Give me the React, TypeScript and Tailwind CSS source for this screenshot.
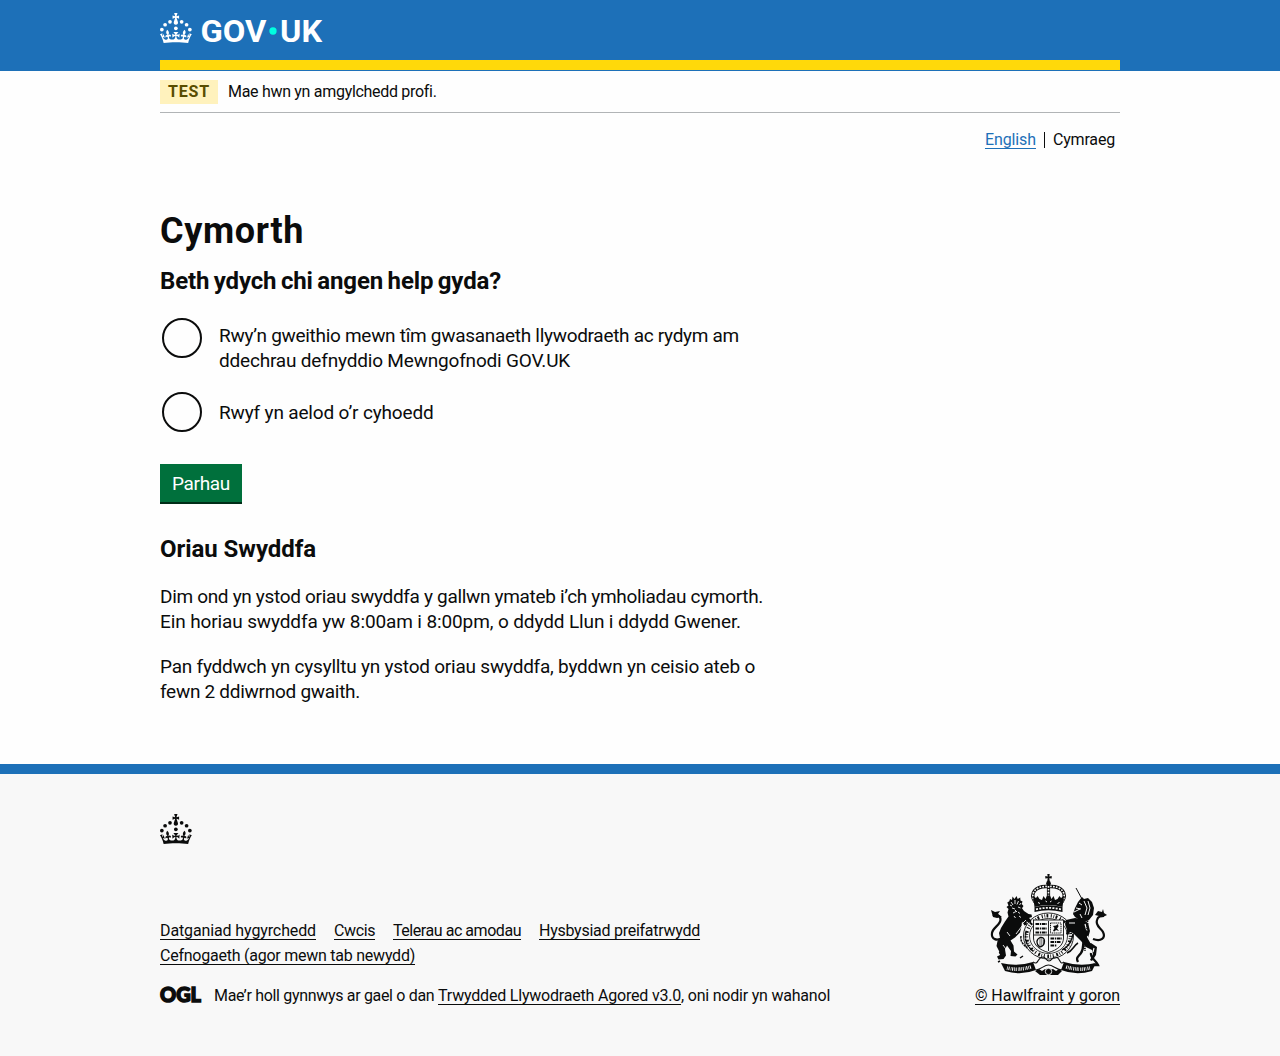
import type { ReactNode } from "react";

const link =
  "underline decoration-1 underline-offset-[3px] [text-decoration-skip-ink:none]";

function Crown() {
  return (
    <g fill="currentColor">
      <circle cx="20" cy="17.6" r="3.7" />
      <circle cx="10.2" cy="23.5" r="3.7" />
      <circle cx="3.7" cy="33.2" r="3.7" />
      <circle cx="31.7" cy="30.6" r="3.7" />
      <circle cx="43.3" cy="17.6" r="3.7" />
      <circle cx="53.2" cy="23.5" r="3.7" />
      <circle cx="59.7" cy="33.2" r="3.7" />
      <path d="M33.1,9.8c.2-.1.3-.3.5-.5l4.6,2.4v-6.8l-4.6,1.5c-.1-.2-.3-.3-.5-.5l1.9-5.9h-6.7l1.9,5.9c-.2.1-.3.3-.5.5l-4.6-1.5v6.8l4.6-2.4c.1.2.3.3.5.5l-2.6,8c-.9,2.8,1.2,5.7,4.1,5.7h0c3,0,5.1-2.9,4.1-5.7l-2.6-8ZM37,37.9s-3.4,3.8-4.1,6.1c2.2,0,4.2-.5,6.4-2.8l-.7,8.5c-2-2.8-4.4-4.1-5.7-3.8.1,3.1.5,6.7,5.8,7.2,3.7.3,6.7-1.5,7-3.8.4-2.6-2-4.3-3.7-1.6-1.4-4.5,2.4-6.1,4.9-3.2-1.9-4.5-1.8-7.7,2.4-10.9,3,4,2.6,7.3-1.2,11.1,2.4-1.3,6.2,0,4,4.6-1.2-2.8-3.7-2.2-4.2.2-.3,1.7.7,3.7,3,4.2,1.9.3,4.7-.9,7-5.9-1.3,0-2.4.7-3.9,1.7l2.4-8c.6,2.3,1.4,3.7,2.2,4.5.6-1.6.5-2.8,0-5.3l5,1.8c-2.6,3.6-5.2,8.7-7.3,17.5-7.4-1.1-15.7-1.7-24.5-1.7h0c-8.8,0-17.1.6-24.5,1.7-2.1-8.9-4.7-13.9-7.3-17.5l5-1.8c-.5,2.5-.6,3.7,0,5.3.8-.8,1.6-2.3,2.2-4.5l2.4,8c-1.5-1-2.6-1.7-3.9-1.7,2.3,5,5.2,6.2,7,5.9,2.3-.4,3.3-2.4,3-4.2-.5-2.4-3-3.1-4.2-.2-2.2-4.6,1.6-6,4-4.6-3.7-3.7-4.2-7.1-1.2-11.1,4.2,3.2,4.3,6.4,2.4,10.9,2.5-2.8,6.3-1.3,4.9,3.2-1.8-2.7-4.1-1-3.7,1.6.3,2.3,3.3,4.1,7,3.8,5.4-.5,5.7-4.2,5.8-7.2-1.3-.2-3.7,1-5.7,3.8l-.7-8.5c2.2,2.3,4.2,2.7,6.4,2.8-.7-2.3-4.1-6.1-4.1-6.1h10.6,0Z" />
    </g>
  );
}

function GovLogo() {
  return (
    <svg width="164" height="30" viewBox="0 0 328 60" className="block overflow-visible text-white" aria-label="GOV.UK">
      <Crown />
      <text x="81" y="58" fontSize="61" fontWeight="700" fill="currentColor" textLength="132" lengthAdjust="spacingAndGlyphs" fontFamily="Roboto, sans-serif">GOV</text>
      <circle cx="226" cy="36" r="7.3" fill="#00ffe0" />
      <text x="240" y="58" fontSize="61" fontWeight="700" fill="currentColor" textLength="84" lengthAdjust="spacingAndGlyphs" fontFamily="Roboto, sans-serif">UK</text>
    </svg>
  );
}

function RoyalArms() {
  return (
    <svg width="117" height="102" viewBox="0 0 117 102" className="block" fill="#0b0c0c" stroke="none">
      {/* crown */}
      <path d="M57.3 0h2.4l-.4 2.4 2.4-.4v2.6l-2.4-.4.6 3.8h-2.8l.6-3.8-2.4.4V2l2.4.4z" />
      <circle cx="58.5" cy="9.5" r="2.4" />
      <path d="M45 28C39 19 46 12 57 12.5M72 28c6-9-1-16-12-15.500" fill="none" stroke="#0b0c0c" strokeWidth="3.4" />
      <path d="M45 28C39 19 46 12 57 12.500M72 28c6-9-1-16-12-15.500" fill="none" stroke="#f8f8f8" strokeWidth="1.700" strokeDasharray="1.800 1.200" />
      <path d="M58.500 11v14" stroke="#0b0c0c" strokeWidth="3.200" />
      <path d="M58.500 12v12" stroke="#f8f8f8" strokeWidth="1.600" strokeDasharray="1.700 1.200" />
      <path d="M43 22l3 2 1.500-2 2 3 2.500 1 1.500-4 2 3 1.500-3.500h3L61.500 25l2-3 1.500 4 2.500-1 2-3 1.500 2 3-2-1.500 11Q58.500 29 44.500 33z" />
      <path d="M48 28.500l2 1M55.500 27l1.500 1M61.500 27l-1.500 1M67.500 29.500l2-1" stroke="#f8f8f8" strokeWidth="1" />
      <path d="M44.500 33q14-3.500 28 0v5q-14-3.500-28 0z" />
      <path d="M46 35.300q12.500-2.800 25 0" fill="none" stroke="#f8f8f8" strokeWidth="1.800" strokeDasharray="2 1.300" />

      {/* garter */}
      <ellipse cx="58.500" cy="62" rx="25" ry="23" fill="none" stroke="#0b0c0c" strokeWidth=".9" />
      <ellipse cx="58.500" cy="62" rx="19" ry="17.500" fill="none" stroke="#0b0c0c" strokeWidth=".8" />
      <ellipse cx="58.500" cy="62" rx="22" ry="20.200" fill="none" stroke="#0b0c0c" strokeWidth="3.400" strokeDasharray="1 1.700 .7 1.400 1.800 2.600" />

      {/* quartered shield */}
      <path d="M43.500 46h30v18c0 7-6 12-15 14.500C49.500 76 43.500 71 43.500 64z" fill="#f8f8f8" stroke="#0b0c0c" strokeWidth=".9" />
      <path d="M58.500 47v30M44 61h29" stroke="#0b0c0c" strokeWidth=".9" />
      <path d="M45.500 50h11.500M45.500 54.500h11.500M45.500 58.500h11.500M60.500 64.500h11.500M60.500 68h10M60.500 71.500h6.500" stroke="#0b0c0c" strokeWidth="2" strokeDasharray="3.600 .8 1.400 .7" />
      <path d="M60.500 49h10.500v10H60.500z" fill="none" stroke="#0b0c0c" strokeWidth="1" strokeDasharray="1.200 .7" />
      <path d="M63 57l1.500-3-1.500-2 3-.5 2-1.500.5 2.500-1.500 2 2 2.500-3-1-1.500 1.500z" />
      <path d="M50 63.500c-4 2-4 6-.5 9.500 3-.5 5-3 5-6s-2-4-4.500-3.500z" fill="none" stroke="#0b0c0c" strokeWidth="1.300" />
      <path d="M50 64v8M51.800 64v8M53.500 65.500v5" stroke="#0b0c0c" strokeWidth=".6" />

      {/* lion */}
      <path d="M20 25l2 1 .5-3.500 2 2.500 2-3 1.200 3 2.500-1.500.3 3 2 1-.8 2.500 1.800 2-1.500 2.200 2 2.800 4.500 3 3 .5.500 2.500-3 1 2.500 2.500-1 2.500-4-1.500.5 3-2.500 1-2.500-4-.5 5-1.500 6-5 5-4.500 3 3 5 .5 6 3.500 3-2 2-5-.5.500-5-4-5.500-2 4 1 6-2.500 3.500-5 .5-1.500-3 3-1.500-1-4-2.500-5 1-5 2.500-3-1-5 2-5 4-6.500 3.500-5-1-4 1-3.500-2-2 2-1.500-1.200-3 2-1.200z" />
      <path d="M21 28l2 3M25 26v4M28.500 27l-1.500 3.500M22 34l3 1M23 39l3-1.500M28 33l2.500 1M28 38l2 1.500M31 29l-1.500 2M20 31l2 1M25 36l2 2M29 42l2 1.500M24 42l1.500 2" stroke="#f8f8f8" strokeWidth=".9" />
      <path d="M32 52l-6 8M17 58l3 4M13 71l3 4M24 71l3 3M36 46l-3 3" stroke="#f8f8f8" strokeWidth=".9" />
      <path d="M13 63C7 68 1 65 2 59c1-6 9-8 8.500-14C10 41 6 40 3 42" fill="none" stroke="#0b0c0c" strokeWidth="2.200" />
      <path d="M1 36l4 2 5-1-2 3 4 3-5 1-4-1z" />
      <path d="M12 78l-3 1M12 84l-3-1M30 84l3-2M10 87l-2 1" stroke="#0b0c0c" strokeWidth="1.500" />
      <path d="M31 62c-1 6 3 9 6 12M36 58c-2 8 1 14 7 19" fill="none" stroke="#0b0c0c" strokeWidth="1.500" strokeDasharray="2.500 .7" />

      {/* unicorn */}
      <path d="M86 14l6 11" stroke="#0b0c0c" strokeWidth="1" />
      <path d="M83 40l2-6 3-6 4-5 2 2 4-1 4 4 2 6-1 7-4 5-5 2-6-3-3-2z" />
      <path d="M84 38l6-3M89 29l3 2M94 27l3 7-2 7M98 27l2 7-2 7M86 34l5 1M90 40l2 4" fill="none" stroke="#f8f8f8" strokeWidth="1" />
      <path d="M76 46l9-2 7 1 6 4 2 8-2 7 3 5 6 4-1 8-4 6-2-1 3-6-1-4-6-3-5-6-8-8-3-1-2 3-2-1 1-4-2-6z" />
      <path d="M79 49l6 0M97 62l4 7M104 74l-1 4M95 50l2 7" stroke="#f8f8f8" strokeWidth="1.200" />
      <path d="M96 62c-5 6-1 12-5 17s-5 5-3 9M101 79c-1 5 5 7 7 12h-5" fill="none" stroke="#0b0c0c" strokeWidth="2.300" />
      <path d="M97 44c2 11-3 20-2 33" fill="none" stroke="#0b0c0c" strokeWidth="1.800" strokeDasharray="1.500 1" />
      <path d="M103 65c8 3 13-1 10-7-2-4-8-6-6-12 1-4 4-4 7-4" fill="none" stroke="#0b0c0c" strokeWidth="2.200" />
      <path d="M105 41l3-4 4 1 1-3 1 4 3 2-4 2-4-1z" />
      <path d="M83 60c-1 7-5 13-11 16M88 69c-5 3-5 8-11 10" fill="none" stroke="#0b0c0c" strokeWidth="1.500" />

      {/* motto scroll */}
      <path d="M11 89q16 4 32-1l3 8q-15 6-31 1z" />
      <path d="M106 89q-16 4-32-1l-3 8q15 6 31 1z" />
      <path d="M17 94q12 3 25-1.500M100 94q-12 3-25-1.500" fill="none" stroke="#f8f8f8" strokeWidth="3.600" strokeDasharray=".7 .9 1 1.200 .6 .8 1.100 .9" />
      <path d="M43 88c6 4 4-5 10-5 3 0 3 4 6 4s3-4 6-4c6 0 4 9 9 5M46 96c6-1 8-5 12.500-5s7 4 13 5" fill="none" stroke="#0b0c0c" strokeWidth="1.100" />
      <path d="M45 97l4-2 3 2 3-2 4 1 4-1 3 2 3-2 3 2-4 4H50z" />
      <circle cx="58.500" cy="97.500" r="3.200" stroke="#f8f8f8" strokeWidth=".9" />
    </svg>
  );
}

function OglLogo() {
  return (
    <svg width="41" height="17" viewBox="0 0 41 17" className="block overflow-visible" aria-label="OGL">
      <text x="0" y="15.900" fontSize="21" fontWeight="900" stroke="#0b0c0c" strokeWidth="1.500" fill="#0b0c0c" textLength="41" lengthAdjust="spacingAndGlyphs" fontFamily="Lato, sans-serif">OGL</text>
    </svg>
  );
}

function Radio({ id, children }: { id: string; children: ReactNode }) {
  return (
    <div className="flex items-start">
      <input
        type="radio"
        name="support"
        id={id}
        className="mt-0.5 ml-0.5 size-10 shrink-0 appearance-none rounded-full border-2 border-[#0b0c0c] bg-transparent"
      />
      <label htmlFor={id} className="ml-[17px] pt-[7px] whitespace-nowrap">
        {children}
      </label>
    </div>
  );
}

export default function App() {
  return (
    <div className="min-h-[1056px] bg-[#fefefe] font-[Roboto,sans-serif] text-[#0b0c0c]">
      <header className="h-[71px] bg-[#1d70b8]">
        <div className="mx-auto flex h-[70px] w-[960px] flex-col border-b-[10px] border-[#ffd90a] pt-[13px]">
          <GovLogo />
        </div>
      </header>

      <div className="mx-auto w-[960px]">
        <div className="flex h-[42px] items-start border-b border-[#b1b4b6] pt-[9px] text-base leading-5">
          <strong className="h-6 w-[58px] bg-[#fff2bd] pt-0.5 pl-2 font-bold tracking-[0.83px] text-[#594d00]">TEST</strong>
          <span className="ml-2.5 pt-0.5 tracking-[-0.302px]">Mae hwn yn amgylchedd profi.</span>
        </div>

        <nav className="mt-[17px] flex h-5 items-center justify-end pr-[5px] text-base leading-5">
          <a href="#" className={`${link} tracking-[-0.109px] text-[#1d70b8]`}>English</a>
          <span className="mr-2 ml-2 h-4 w-px bg-[#0b0c0c]" />
          <span className="tracking-[-0.185px]">Cymraeg</span>
        </nav>

        <main className="pt-[61px] text-[19px] leading-[25px] whitespace-nowrap">
          <h1 className="text-4xl leading-10 font-bold tracking-[0.65px]">Cymorth</h1>
          <h2 className="mt-[15px] text-2xl leading-[30px] font-bold tracking-[-0.15px] [word-spacing:-1.25px]">Beth ydych chi angen help gyda?</h2>

          <div className="mt-5 flex flex-col">
            <Radio id="team">
              <span className="block tracking-[-0.296px]">Rwy’n gweithio mewn tîm gwasanaeth llywodraeth ac rydym am</span>
              <span className="block tracking-[-0.185px]">ddechrau defnyddio Mewngofnodi GOV.UK</span>
            </Radio>
            <div className="mt-[17px]">
              <Radio id="public">
                <span className="block pt-[3px] tracking-[-0.168px]">Rwyf yn aelod o’r cyhoedd</span>
              </Radio>
            </div>
          </div>

          <button type="button" className="mt-8 block h-10 w-[82px] border-b-2 border-[#002d18] bg-[#00703c] pt-px text-center leading-[38px] tracking-[-0.322px] text-white">
            Parhau
          </button>

          <h2 className="mt-[30px] text-2xl leading-[30px] font-bold tracking-[-0.056px]">Oriau Swyddfa</h2>
          <p className="mt-5">
            <span className="block tracking-[-0.322px]">Dim ond yn ystod oriau swyddfa y gallwn ymateb i’ch ymholiadau cymorth.</span>
            <span className="block tracking-[-0.121px]">Ein horiau swyddfa yw 8:00am i 8:00pm, o ddydd Llun i ddydd Gwener.</span>
          </p>
          <p className="mt-5">
            <span className="block tracking-[-0.222px]">Pan fyddwch yn cysylltu yn ystod oriau swyddfa, byddwn yn ceisio ateb o</span>
            <span className="block tracking-[-0.28px]">fewn 2 ddiwrnod gwaith.</span>
          </p>
        </main>
      </div>

      <footer className="mt-[60px] h-[292px] border-t-[10px] border-[#1d70b8] bg-[#f8f8f8] text-base whitespace-nowrap">
        <div className="mx-auto w-[960px] pt-10">
          <svg width="32" height="30" viewBox="0 0 64 60" className="block">
            <Crown />
          </svg>
          <div className="mt-[30px] flex justify-between">
            <div className="pt-11">
              <ul className="flex w-[600px] flex-wrap gap-x-[18px] leading-[25px]">
                <li><a href="#" className={`${link} tracking-[-0.119px]`}>Datganiad hygyrchedd</a></li>
                <li><a href="#" className={`${link} tracking-[-0.392px]`}>Cwcis</a></li>
                <li><a href="#" className={`${link} tracking-[-0.452px]`}>Telerau ac amodau</a></li>
                <li><a href="#" className={`${link} tracking-[-0.263px]`}>Hysbysiad preifatrwydd</a></li>
                <li><a href="#" className={`${link} tracking-[-0.241px]`}>Cefnogaeth (agor mewn tab newydd)</a></li>
              </ul>
              <div className="mt-[18px] flex items-start leading-5">
                <OglLogo />
                <p className="ml-[13px] tracking-[-0.321px]">
                  {"Mae’r holl gynnwys ar gael o dan "}
                  <a href="#" className={`${link} tracking-[-0.198px]`}>Trwydded Llywodraeth Agored v3.0</a>
                  <span className="tracking-[-0.212px]">, oni nodir yn wahanol</span>
                </p>
              </div>
            </div>
            <div className="flex flex-col items-end">
              <div className="mr-[13px]">
                <RoyalArms />
              </div>
              <a href="#" className={`${link} mt-[10px] leading-5 tracking-[-0.087px]`}>© Hawlfraint y goron</a>
            </div>
          </div>
        </div>
      </footer>
    </div>
  );
}
